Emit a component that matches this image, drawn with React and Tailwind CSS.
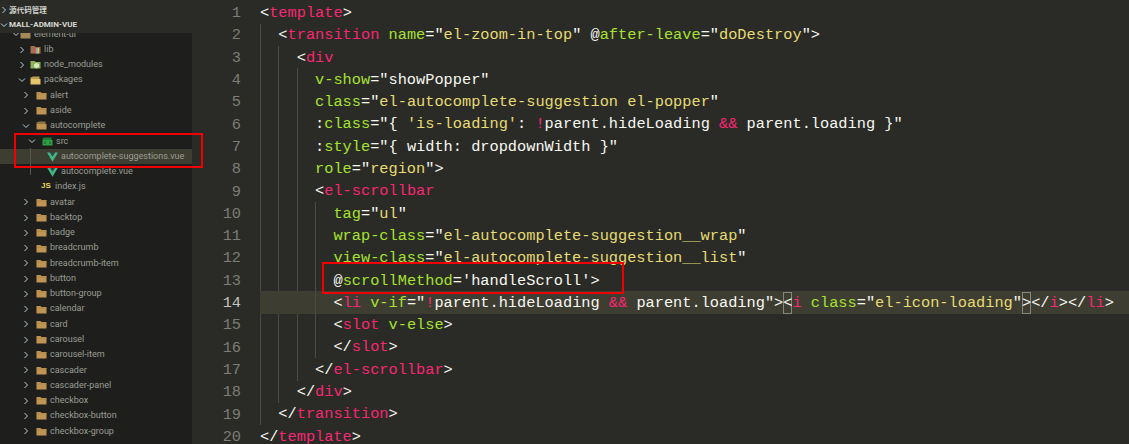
import React from 'react';

const c = {
  p: 'text-[#f8f8f2]',
  t: 'text-[#f92672]',
  a: 'text-[#a6e22e]',
  s: 'text-[#e6db74]',
  b: 'text-[#f8f8f2] inline-block shadow-[inset_0_0_0_1px_#85867c]',
};

const code = [
  [0, [['p', '<'], ['t', 'template'], ['p', '>']]],
  [1, [['p', '<'], ['t', 'transition'], ['a', ' name'], ['p', '="'], ['s', 'el-zoom-in-top'], ['p', '" @'], ['a', 'after-leave'], ['p', '="'], ['s', 'doDestroy'], ['p', '">']]],
  [2, [['p', '<'], ['t', 'div']]],
  [3, [['a', 'v-show'], ['p', '="showPopper"']]],
  [3, [['a', 'class'], ['p', '="'], ['s', 'el-autocomplete-suggestion el-popper'], ['p', '"']]],
  [3, [['p', ':'], ['a', 'class'], ['p', '="{ '], ['s', "'is-loading'"], ['p', ': '], ['t', '!'], ['p', 'parent.hideLoading '], ['t', '&&'], ['p', ' parent.loading }"']]],
  [3, [['p', ':'], ['a', 'style'], ['p', '="{ width: dropdownWidth }"']]],
  [3, [['a', 'role'], ['p', '="'], ['s', 'region'], ['p', '">']]],
  [3, [['p', '<'], ['t', 'el-scrollbar']]],
  [4, [['a', 'tag'], ['p', '="'], ['s', 'ul'], ['p', '"']]],
  [4, [['a', 'wrap-class'], ['p', '="'], ['s', 'el-autocomplete-suggestion__wrap'], ['p', '"']]],
  [4, [['a', 'view-class'], ['p', '="'], ['s', 'el-autocomplete-suggestion__list'], ['p', '"']]],
  [4, [['p', '@'], ['a', 'scrollMethod'], ['p', "='handleScroll'>"]]],
  [4, [['p', '<'], ['t', 'li'], ['a', ' v-if'], ['p', '="'], ['t', '!'], ['p', 'parent.hideLoading '], ['t', '&&'], ['p', ' parent.loading">'], ['b', '<'], ['t', 'i'], ['a', ' class'], ['p', '="'], ['s', 'el-icon-loading'], ['p', '"'], ['b', '>'], ['p', '</'], ['t', 'i'], ['p', '></'], ['t', 'li'], ['p', '>']]],
  [4, [['p', '<'], ['t', 'slot'], ['a', ' v-else'], ['p', '>']]],
  [4, [['p', '</'], ['t', 'slot'], ['p', '>']]],
  [3, [['p', '</'], ['t', 'el-scrollbar'], ['p', '>']]],
  [2, [['p', '</'], ['t', 'div'], ['p', '>']]],
  [1, [['p', '</'], ['t', 'transition'], ['p', '>']]],
  [0, [['p', '</'], ['t', 'template'], ['p', '>']]],
];

const tree = [
  ['element-ui', 16, 'open', 'gray', 34],
  ['lib', 22, 'closed', 'lib', 44],
  ['node_modules', 22, 'closed', 'node', 44],
  ['packages', 22, 'open', 'yellow', 44],
  ['alert', 26, 'closed', 'folder', 50],
  ['aside', 26, 'closed', 'folder', 50],
  ['autocomplete', 26, 'open', 'openfolder', 50],
  ['src', 32, 'open', 'src', 56],
  ['autocomplete-suggestions.vue', 0, null, 'vue', 61],
  ['autocomplete.vue', 0, null, 'vue', 61],
  ['index.js', 0, null, 'js', 55],
  ...['avatar', 'backtop', 'badge', 'breadcrumb', 'breadcrumb-item', 'button', 'button-group', 'calendar', 'card', 'carousel', 'carousel-item', 'cascader', 'cascader-panel', 'checkbox', 'checkbox-button', 'checkbox-group'].map((n) => [n, 26, 'closed', 'folder', 50]),
];

const Chevron = ({ open }) => (
  <svg width="8" height="8" viewBox="0 0 8 8" fill="none" stroke="#b9cfe0" strokeWidth="1">
    <path d={open ? 'M1 2.5 L4 5.5 L7 2.5' : 'M2.5 1 L5.5 4 L2.5 7'} />
  </svg>
);

const Folder = ({ color, dark }) => (
  <svg width="11" height="9" viewBox="0 0 11 9">
    <path d="M0.5 1 H4.5 L5.5 2 H10.5 V8.5 H0.5 Z" fill={color} />
    <path d="M0.5 3 H10.5" stroke={dark} strokeWidth="0.6" />
  </svg>
);

const OpenFolder = ({ color, dark }) => (
  <svg width="11" height="9" viewBox="0 0 11 9">
    <path d="M0.5 1.5 L3 0.5 H9.5 V3 H0.5 Z" fill={dark} />
    <path d="M0.5 3 H10.5 V8.5 H0.5 Z" fill={color} />
  </svg>
);

const FileIcon = ({ kind }) => {
  if (kind === 'vue') {
    return (
      <svg width="11" height="10" viewBox="0 0 11 10">
        <path d="M0 0.5 H3 L5.5 4.6 L8 0.5 H11 L5.5 9.8 Z" fill="#41b883" />
        <path d="M3 0.5 H4.6 L5.5 2 L6.4 0.5 H8 L5.5 4.6 Z" fill="#35495e" />
      </svg>
    );
  }
  if (kind === 'js') {
    return <span className="text-[8px] leading-none font-bold text-[#e8d44d] font-['Liberation_Sans',sans-serif]">JS</span>;
  }
  if (kind === 'folder') return <Folder color="#c09553" dark="#a67f43" />;
  if (kind === 'openfolder') return <OpenFolder color="#c09553" dark="#8f7342" />;
  if (kind === 'gray') return <OpenFolder color="#a58a58" dark="#8f7342" />;
  if (kind === 'yellow') return <OpenFolder color="#e4c46c" dark="#b89c50" />;
  if (kind === 'src') {
    return (
      <svg width="11" height="9" viewBox="0 0 11 9">
        <path d="M0.5 1.5 L3 0.5 H9.5 V3 H0.5 Z" fill="#1f7a33" />
        <path d="M0.5 3 H10.5 V8.5 H0.5 Z" fill="#2f9e44" />
        <path d="M3.5 4.5 L2.5 5.7 L3.5 7 M7.5 4.5 L8.5 5.7 L7.5 7" stroke="#0d3b17" strokeWidth="0.8" fill="none" />
      </svg>
    );
  }
  if (kind === 'node') {
    return (
      <svg width="11" height="9" viewBox="0 0 11 9">
        <path d="M0.5 1 H4.5 L5.5 2 H10.5 V8.5 H0.5 Z" fill="#8bb35a" />
        <path d="M6.5 2.8 L9 4.2 V7 L6.5 8.4 L4 7 V4.2 Z" fill="#d6e6bf" />
      </svg>
    );
  }
  // lib
  return (
    <svg width="11" height="9" viewBox="0 0 11 9">
      <path d="M0.5 1 H4.5 L5.5 2 H10.5 V8.5 H0.5 Z" fill="#a0704f" />
      <path d="M4.5 3 H6 V8.5 H4.5 Z" fill="#d9585f" />
      <path d="M6 3 H7.5 V8.5 H6 Z" fill="#5db7d6" />
      <path d="M7.5 3 H9 V8.5 H7.5 Z" fill="#e2c35a" />
    </svg>
  );
};

const TreeRow = ({ row }) => {
  const [name, chevronX, chevron, icon, textX] = row;
  const active = name === 'autocomplete-suggestions.vue';
  return (
    <div className={`relative flex h-[15.27px] items-center ${active ? 'bg-[#3e3d32]' : ''}`}>
      {chevron && (
        <span className="absolute top-[3.5px] flex" style={{ left: chevronX - 4 }}>
          <Chevron open={chevron === 'open'} />
        </span>
      )}
      <span className="absolute top-[3px] flex" style={{ left: textX - 14 }}>
        <FileIcon kind={icon} />
      </span>
      <span className="whitespace-nowrap text-[#9a9d94]" style={{ marginLeft: textX }}>
        {name}
      </span>
    </div>
  );
};

const CodeLine = ({ indent, tokens, active }) => {
  const guides = [];
  for (let i = 0; i < indent; i++) {
    guides.push(
      <span
        key={i}
        className={`inline-block h-full w-[18.36px] shrink-0 border-l ${active && i < 3 ? 'border-transparent' : 'border-[#4a4b44]'}`}
      />
    );
  }
  return (
    <div className={`flex h-[22.31px] whitespace-pre ${active ? 'bg-[#3e3d32]' : ''}`}>
      {guides}
      <span className="mt-[0.5px]">
        {tokens.map(([k, text], i) => (
          <span key={i} className={c[k]}>
            {text}
          </span>
        ))}
      </span>
    </div>
  );
};

export default function App() {
  return (
    <div className="relative flex h-[444px] w-[1129px] overflow-hidden bg-[#2a2b26]">
      {/* sidebar */}
      <aside className="flex h-full w-[192px] shrink-0 flex-col font-['Roboto',sans-serif] text-[9px]">
        <div className="flex h-[33px] shrink-0 flex-col bg-[#2a2b26] pt-[2px] font-bold text-[#d8d8d2]">
          <div className="flex h-[15px] items-center gap-[1px]">
            <Chevron />
            <span className="font-['Noto_Sans_CJK_SC',sans-serif] text-[7.6px] text-[#d0d2cc]">源代码管理</span>
          </div>
          <div className="flex h-[15px] items-center gap-[1px]">
            <Chevron open />
            <span className="text-[8px] leading-none">MALL-ADMIN-VUE</span>
          </div>
        </div>
        <div className="relative min-h-0 flex-1 overflow-hidden bg-[#1e1f1c]">
          <div className="-mt-[6.2px]">
            {tree.map((row) => (
              <TreeRow key={row[0]} row={row} />
            ))}
          </div>
          <div className="absolute left-[30px] top-[115px] h-[27px] w-px bg-[#55564f]" />
        </div>
      </aside>

      {/* line numbers */}
      <div className="w-[49px] shrink-0 pt-[2px] text-right font-['Liberation_Mono',monospace] text-[15.3px] leading-[22.31px] text-[#7c7d75]">
        {code.map((_, i) => (
          <div key={i} className={i === 13 ? 'text-[#c2c2bf]' : ''}>
            {i + 1}
          </div>
        ))}
      </div>

      {/* code */}
      <div className="ml-[19px] min-w-0 flex-1 pt-[1.5px] font-['Liberation_Mono',monospace] text-[15.3px] leading-[22.31px]">
        {code.map(([indent, tokens], i) => (
          <CodeLine key={i} indent={indent} tokens={tokens} active={i === 13} />
        ))}
      </div>

      {/* red annotation boxes */}
      <div className="absolute left-[14px] top-[133px] h-[35px] w-[189px] border-[2.5px] border-[#f00000]" />
      <div className="absolute left-[322px] top-[262px] h-[32px] w-[302px] border-[2.5px] border-[#f00000]" />
    </div>
  );
}
